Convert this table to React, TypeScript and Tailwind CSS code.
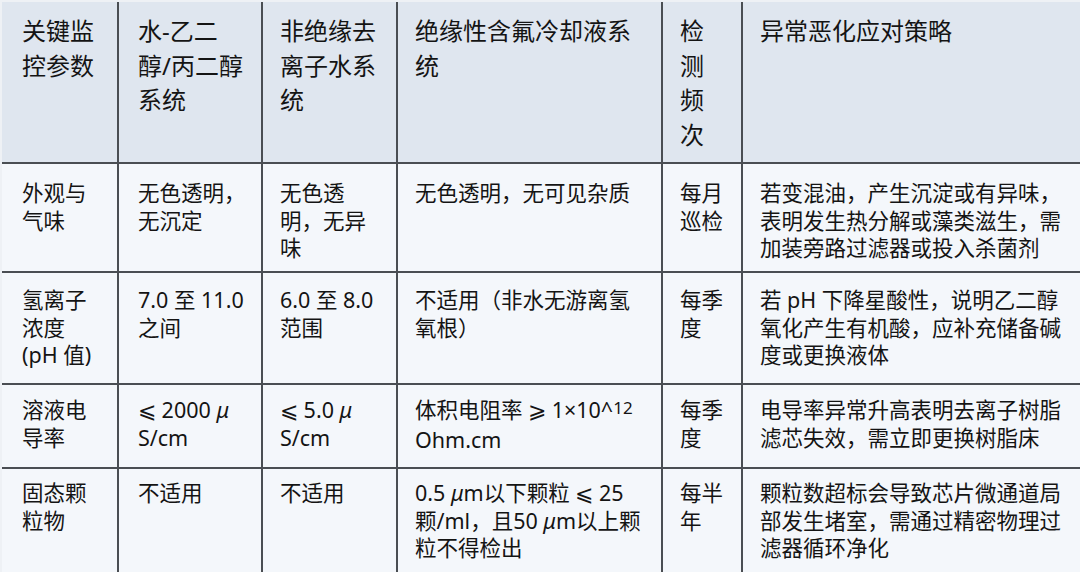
import React from "react";

type Cell = React.ReactNode[];

const Mu = () => <span className="italic">μ</span>;

const header: Cell[] = [
  ["关键监", "控参数"],
  ["水-乙二", "醇/丙二醇", "系统"],
  ["非绝缘去", "离子水系", "统"],
  ["绝缘性含氟冷却液系", "统"],
  ["检", "测", "频", "次"],
  ["异常恶化应对策略"],
];

const rows: Cell[][] = [
  [
    ["外观与", "气味"],
    ["无色透明，", "无沉定"],
    ["无色透", "明，无异", "味"],
    ["无色透明，无可见杂质"],
    ["每月", "巡检"],
    ["若变混油，产生沉淀或有异味，", "表明发生热分解或藻类滋生，需", "加装旁路过滤器或投入杀菌剂"],
  ],
  [
    ["氢离子", "浓度", "(pH 值)"],
    ["7.0 至 11.0", "之间"],
    ["6.0 至 8.0", "范围"],
    ["不适用（非水无游离氢", "氧根）"],
    ["每季", "度"],
    ["若 pH 下降星酸性，说明乙二醇", "氧化产生有机酸，应补充储备碱", "度或更换液体"],
  ],
  [
    ["溶液电", "导率"],
    [<>⩽ 2000 <Mu /></>, "S/cm"],
    [<>⩽ 5.0 <Mu /></>, "S/cm"],
    [
      <>
        体积电阻率 ⩾ 1×10^<span className="relative -top-[4px] text-[17px]">12</span>
      </>,
      "Ohm.cm",
    ],
    ["每季", "度"],
    ["电导率异常升高表明去离子树脂", "滤芯失效，需立即更换树脂床"],
  ],
  [
    ["固态颗", "粒物"],
    ["不适用"],
    ["不适用"],
    [
      <>0.5 <Mu />m以下颗粒 ⩽ 25</>,
      <>颗/ml，且50 <Mu />m以上颗</>,
      "粒不得检出",
    ],
    ["每半", "年"],
    ["颗粒数超标会导致芯片微通道局", "部发生堵室，需通过精密物理过", "滤器循环净化"],
  ],
];

const rowPad = ["pt-[15px]", "pt-[13px]", "pt-[11px]", "pt-[10px]"];

export default function App() {
  return (
    <div
      className="w-[1080px] h-[572px] overflow-hidden bg-[#eef1f5] pt-[2px] pl-[2px] text-[#141414]"
      style={{ fontFamily: '"Noto Sans", "Noto Sans CJK SC", sans-serif' }}
    >
      <div className="grid grid-cols-[117px_144px_135px_265px_80px_1fr] grid-rows-[162px_109px_112px_84px_110px]">
        {header.map((c, i) => (
          <div
            key={"h" + i}
            className={`bg-[#dfe6ef] border-b-2 border-[#4a4e53] pt-[12px] text-[24px] leading-[34.5px] whitespace-nowrap ${
              i === 0 ? "pl-[20px]" : i === 1 ? "pl-[19px]" : "pl-[17px]"
            } ${i < 5 ? "border-r-2" : ""}`}
          >
            {c.map((l, j) => (
              <div key={j}>{l}</div>
            ))}
          </div>
        ))}
        {rows.map((r, ri) =>
          r.map((c, i) => (
            <div
              key={ri + "-" + i}
              className={`bg-[#f4f7fb] border-[#4a4e53] ${rowPad[ri]} text-[21.5px] leading-[27.5px] whitespace-nowrap ${
                i === 0 ? "pl-[20px]" : i === 1 ? "pl-[19px]" : "pl-[17px]"
              } ${i < 5 ? "border-r-2" : ""} ${ri < 3 ? "border-b-2" : ""}`}
            >
              {c.map((l, j) => (
                <div key={j}>{l}</div>
              ))}
            </div>
          ))
        )}
      </div>
    </div>
  );
}
